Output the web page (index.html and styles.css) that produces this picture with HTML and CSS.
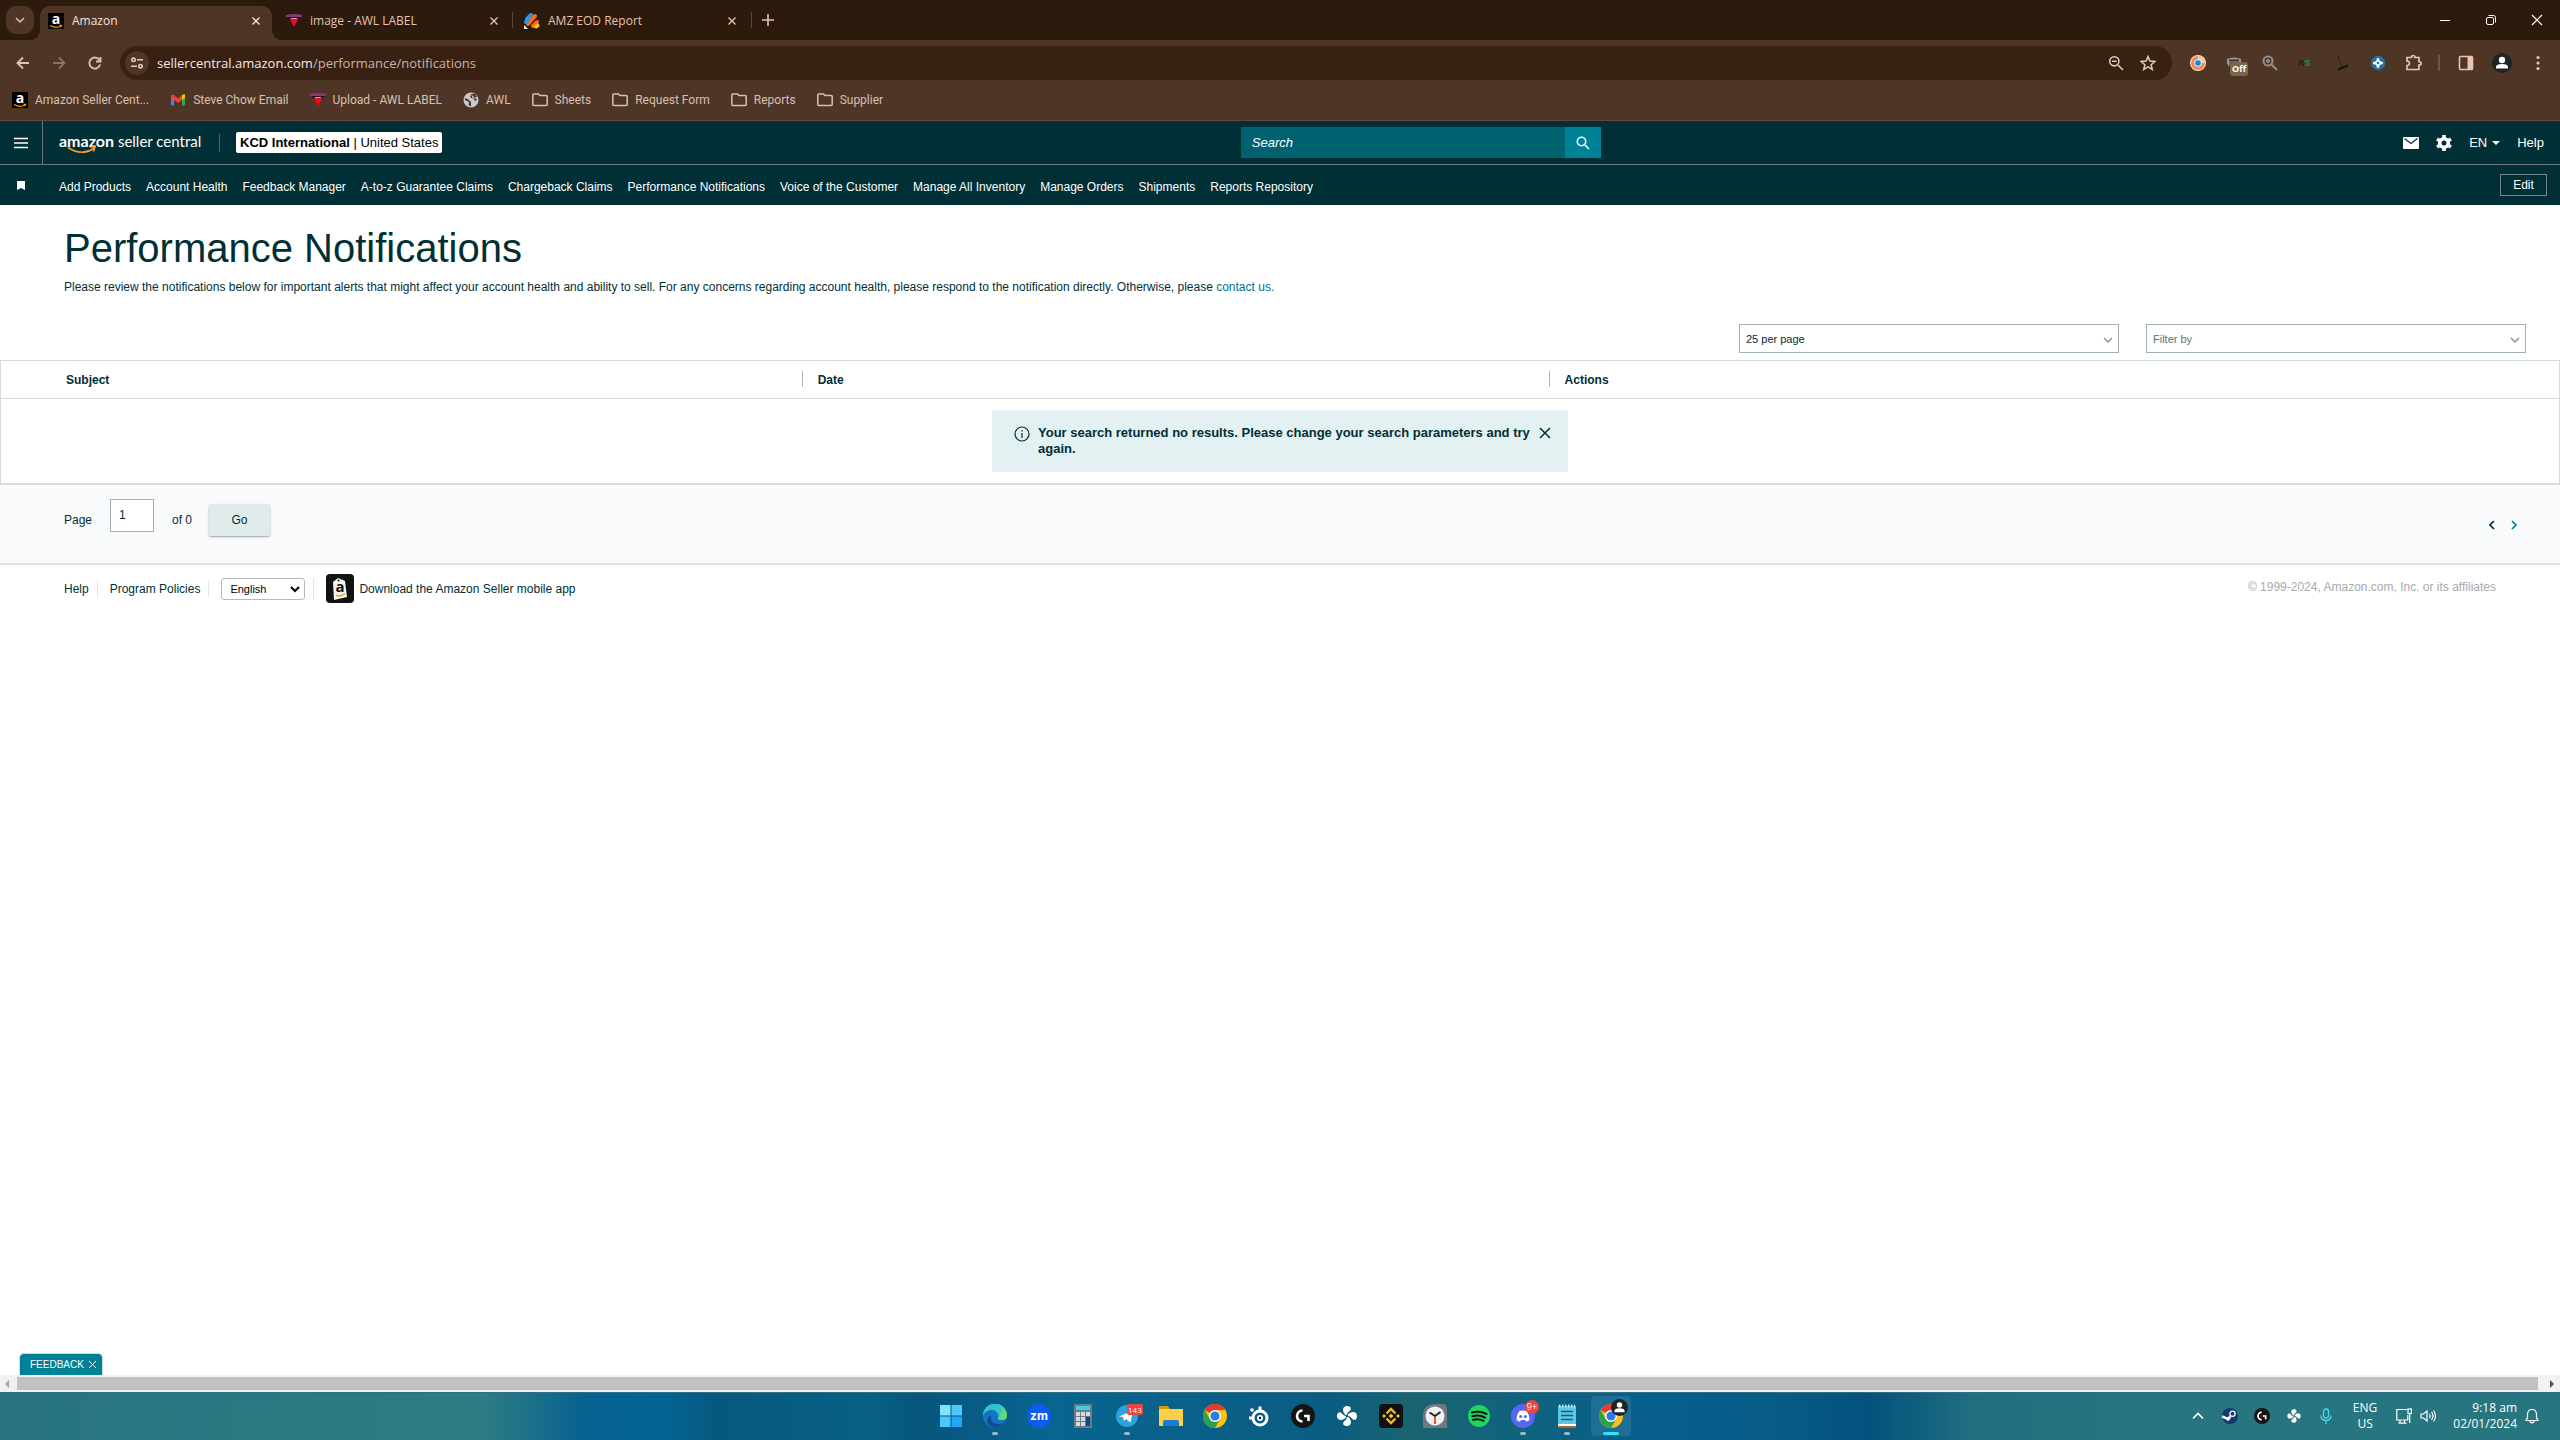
FILE: index.html
```html
<!DOCTYPE html>
<html lang="en">
<head>
    <meta charset="UTF-8">
    <meta name="viewport" content="width=device-width, initial-scale=1.0">
    <title>Amazon</title>
    <link rel="stylesheet" href="styles.css">
</head>
<body>
    <svg class="sprite" aria-hidden="true">
        <symbol id="close" viewBox="0 0 16 16"><path d="M4 4l8 8M12 4l-8 8" fill="none" stroke="currentColor" stroke-width="1.6"/></symbol>
        <symbol id="amazon" viewBox="0 0 16 16"><rect width="16" height="16" fill="#000"/><text x="8" y="11" text-anchor="middle" font-family="Open Sans, sans-serif" font-size="14" font-weight="700" fill="#fff">a</text><path d="M2 12.500q6 3.500 11.500.5M11.500 12.300h2l-.6 1.700" fill="none" stroke="#f90" stroke-width="1.200"/></symbol>
        <symbol id="awl" viewBox="0 0 16 16"><path d="M0 2q8-2 16 0v2H0z" fill="#8a3a70"/><path d="M1 4h14l-3 3H4z" fill="#1d1038"/><path d="M3.500 6h9L8 14z" fill="#f00a14"/><path d="M5 5.500h6" stroke="#d8a0c8"/></symbol>
        <symbol id="folder" viewBox="0 0 16 16"><path d="M.8 3.500v9q0 1 1 1h12.400q1 0 1-1v-8q0-1-1-1H8L6.500 2H1.800q-1 0-1 1z" fill="none" stroke="currentColor" stroke-width="1.500"/></symbol>
        <symbol id="chrome" viewBox="0 0 24 24"><circle cx="12" cy="12" r="12" fill="#fbc116"/><path d="M12 12L1.600 6A12 12 0 0 1 22.400 6H12z" fill="#e33b2e"/><path d="M1.600 6A12 12 0 0 0 12 24l5.200-9L12 12 6.800 15z" fill="#2ba24c"/><circle cx="12" cy="12" r="6" fill="#fff"/><circle cx="12" cy="12" r="4.600" fill="#2a7de9"/></symbol>
        <symbol id="fan" viewBox="0 0 24 24"><g fill="#fff"><path d="M12 12C7 9 6.500 2 12 2c5 0 4.500 4 2 5.500-1.500 1-2 2.500-2 4.500z"/><path d="M12 12c3-5 10-5.500 10 0 0 5-4 4.500-5.500 2-1-1.500-2.500-2-4.500-2z"/><path d="M12 12c5 3 5.500 10 0 10-5 0-4.500-4-2-5.500 1.500-1 2-2.500 2-4.500z"/><path d="M12 12c-3 5-10 5.500-10 0 0-5 4-4.500 5.500-2 1 1.500 2.500 2 4.500 2z"/></g><circle cx="12" cy="12" r="1.300" fill="#0b5c88"/></symbol>
        <symbol id="ghub" viewBox="0 0 24 24"><circle cx="12" cy="12" r="12" fill="#151515"/><path d="M11.500 6.500a5.500 5.500 0 0 0 0 11M13 12h4.500v5" fill="none" stroke="#fff" stroke-width="2.600"/></symbol>
        <symbol id="chev" viewBox="0 0 10 10"><path d="M1 3l4 4 4-4" fill="none" stroke="currentColor" stroke-width="1.500"/></symbol>
        <symbol id="user" viewBox="0 0 20 20"><circle cx="10" cy="10" r="10" fill="#202326"/><circle cx="10" cy="7" r="3.200" fill="#fff"/><path d="M4 15.500v-1.500q0-3 6-3t6 3v1.500z" fill="#fff"/></symbol>
    </svg>

    <!-- Browser tabs -->
    <div class="tab-strip">
        <button class="tab-search" aria-label="Search tabs"><svg width="10" height="10"><use href="#chev"/></svg></button>
        <div class="tab active">
            <svg width="16" height="16"><use href="#amazon"/></svg>
            <span>Amazon</span>
            <button aria-label="Close tab"><svg width="14" height="14"><use href="#close"/></svg></button>
        </div>
        <div class="tab">
            <svg width="16" height="16"><use href="#awl"/></svg>
            <span>image - AWL LABEL</span>
            <button aria-label="Close tab"><svg width="14" height="14"><use href="#close"/></svg></button>
        </div>
        <div class="tab divided">
            <svg width="16" height="16" viewBox="0 0 16 16"><g stroke-width="4" stroke-linecap="round"><path d="M3 6l4-4" stroke="#1c9bf7"/><path d="M4 11l7-8" stroke="#ff6a13"/><path d="M3 8l-1 1" stroke="#1c9bf7"/><path d="M9 13l4-4" stroke="#ff6a13"/><path d="M12 13.500l1.500-1" stroke="#fdbb2c"/></g><path d="M0 12l4 4H0z" fill="#fff"/></svg>
            <span>AMZ EOD Report</span>
            <button aria-label="Close tab"><svg width="14" height="14"><use href="#close"/></svg></button>
        </div>
        <button class="new-tab" aria-label="New tab"><svg width="12" height="12" viewBox="0 0 12 12"><path d="M6 0v12M0 6h12" stroke="currentColor" stroke-width="1.600"/></svg></button>
        <div class="window-buttons">
            <button aria-label="Minimize"><svg width="12" height="12" viewBox="0 0 12 12"><path d="M1 6.500h10" stroke="#fff"/></svg></button>
            <button aria-label="Restore"><svg width="12" height="12" viewBox="0 0 12 12" fill="none" stroke="#fff"><rect x="1.500" y="3.500" width="7" height="7" rx="1.500"/><path d="M3.500 1.500h5q2 0 2 2v5"/></svg></button>
            <button aria-label="Close"><svg width="12" height="12" viewBox="0 0 12 12"><path d="M1 1l10 10M11 1L1 11" stroke="#fff" stroke-width="1.200"/></svg></button>
        </div>
    </div>

    <!-- Toolbar -->
    <div class="toolbar">
        <button class="nav-button" aria-label="Back"><svg width="14" height="14" viewBox="0 0 14 14"><path d="M13 7H2M7 1.500L1.500 7 7 12.500"/></svg></button>
        <button class="nav-button dim" aria-label="Forward"><svg width="14" height="14" viewBox="0 0 14 14"><path d="M1 7h11M7 1.500L12.500 7 7 12.500"/></svg></button>
        <button class="nav-button" aria-label="Reload"><svg width="14" height="14" viewBox="0 0 14 14"><path d="M12.200 8.500A5.500 5.500 0 1 1 11.500 4M12.500 1v4.500H8"/></svg></button>
        <div class="omnibox">
            <button class="site-info" aria-label="Site information"><svg width="12" height="12" viewBox="0 0 12 12" fill="none" stroke="currentColor" stroke-width="1.600"><circle cx="2.500" cy="2.800" r="1.700"/><path d="M6 2.800h6M0 9.200h6"/><circle cx="9.500" cy="9.200" r="1.700"/></svg></button>
            <div class="url">sellercentral.amazon.com<span>/performance/notifications</span></div>
            <button aria-label="Zoom"><svg width="16" height="16" viewBox="0 0 16 16" fill="none" stroke="currentColor" stroke-width="1.600"><circle cx="6.300" cy="6.300" r="4.600"/><path d="M10 10l5 5M4 6.300h4.600"/></svg></button>
            <button aria-label="Bookmark"><svg width="16" height="16" viewBox="0 0 16 16"><path d="M8 1.500l1.900 4.600 5 .4-3.800 3.200 1.200 4.800L8 11.900l-4.300 2.600 1.200-4.800L1.100 6.500l5-.4z" fill="none" stroke="currentColor" stroke-width="1.500"/></svg></button>
        </div>
        <div class="extensions">
            <svg width="16" height="16" viewBox="0 0 16 16"><circle cx="8" cy="8" r="8" fill="#ffe1cb"/><circle cx="8" cy="8" r="7" fill="#f3894a"/><path d="M8 1a7 7 0 0 1 7 7H8z" fill="#fbc79d"/><circle cx="8" cy="8" r="3.800" fill="#d9ecff"/><circle cx="8" cy="8" r="2.800" fill="#1587e6"/></svg>
            <span class="ext-off"><svg width="16" height="16" viewBox="0 0 16 16"><path d="M1 4q7-3 14 0v3H4L3 12 1 8z" fill="#9b9b9b"/><path d="M3 5.500h10" stroke="#333" stroke-width="2"/></svg><b>Off</b></span>
            <svg width="16" height="16" viewBox="0 0 16 16" fill="none" stroke="#8c8c8c" stroke-width="2.200"><circle cx="6" cy="6" r="4.500"/><path d="M9.500 9.500L15 15M4 6h4M6 4v4"/></svg>
            <span class="ext-rs">R<i>S</i></span>
            <svg width="16" height="16" viewBox="0 0 16 16"><path d="M4 1l4 11" stroke="#2b2119"/><path d="M4 14.500l10-4" stroke="#111" stroke-width="2"/></svg>
            <svg width="16" height="16" viewBox="0 0 16 16"><circle cx="8" cy="8" r="7.200" fill="#246ea3"/><path d="M8 3.200L9.900 6.100 12.800 8 9.900 9.900 8 12.800 6.100 9.900 3.200 8l2.900-1.900z" fill="#fff"/><path d="M8 3.200v9.600M3.200 8h9.600" stroke="#fff" stroke-width="2.500"/><circle cx="8" cy="8" r="1.300" fill="#246ea3"/></svg>
            <svg class="puzzle" width="18" height="18" viewBox="0 0 18 18"><path d="M2 3.500h4.500q0-2 1.700-2t1.700 2h4v4q2.200 0 2.200 1.800t-2.200 1.800v4.400H2v-4q2.500 0 2.500-2.200T2 7.200z" fill="none" stroke="currentColor" stroke-width="1.700"/></svg>
            <span class="divider"></span>
            <svg width="16" height="16" viewBox="0 0 16 16"><rect x="1.500" y="1.500" width="13" height="13" rx="1" fill="none" stroke="currentColor" stroke-width="1.600"/><path d="M9.500 1.500H14.500v13H9.500z" fill="currentColor"/></svg>
            <svg class="avatar" width="20" height="20"><use href="#user"/></svg>
            <svg width="16" height="16" viewBox="0 0 16 16" fill="currentColor"><circle cx="8" cy="2.500" r="1.600"/><circle cx="8" cy="8" r="1.600"/><circle cx="8" cy="13.500" r="1.600"/></svg>
        </div>
    </div>

    <!-- Bookmarks bar -->
    <nav class="bookmarks">
        <a href="#"><svg width="16" height="16"><use href="#amazon"/></svg>Amazon Seller Cent...</a>
        <a href="#"><svg width="16" height="16" viewBox="0 0 16 16"><path d="M1 3h3v10.500H2q-1 0-1-1z" fill="#4285f4"/><path d="M12 3h3v9.500q0 1-1 1h-2z" fill="#34a853"/><path d="M12 3l3-1v4l-3 2z" fill="#fbbc04"/><path d="M1 3l3 0 4 3.500L12 3v5l-4 3-4-3-3-2z" fill="#ea4335"/></svg>Steve Chow Email</a>
        <a href="#"><svg width="16" height="16"><use href="#awl"/></svg>Upload - AWL LABEL</a>
        <a href="#"><svg width="16" height="16" viewBox="0 0 16 16"><circle cx="8" cy="8" r="7.500" fill="#c9c9cd"/><path d="M2 6q4 1 6 4v4.500L5.500 13 6 10 2 8zM8 2l4-.2 2 3-3.500 1.500L12 9l2-1M8 2L7 5l3 2" fill="#4f3626"/></svg>AWL</a>
        <a href="#"><svg width="16" height="16"><use href="#folder"/></svg>Sheets</a>
        <a href="#"><svg width="16" height="16"><use href="#folder"/></svg>Request Form</a>
        <a href="#"><svg width="16" height="16"><use href="#folder"/></svg>Reports</a>
        <a href="#"><svg width="16" height="16"><use href="#folder"/></svg>Supplier</a>
    </nav>

    <!-- Seller Central header -->
    <header class="header">
        <button class="menu" aria-label="Menu"><svg width="14" height="12" viewBox="0 0 14 12"><path d="M0 1.500h14M0 6h14M0 10.500h14" stroke="#fff" stroke-width="1.600"/></svg></button>
        <a class="logo" href="#"><b>amazon</b> seller central
            <svg class="smile" width="30" height="8" viewBox="0 0 30 8"><path d="M1 1.500q13 9 26 1M23 1l5 0-1.500 4.500" fill="none" stroke="#f79a2b" stroke-width="1.600"/></svg>
        </a>
        <button class="account"><b>KCD International</b> | United States</button>
        <form class="search">
            <input type="text" placeholder="Search" aria-label="Search">
            <button type="button" aria-label="Search"><svg width="14" height="14" viewBox="0 0 14 14" fill="none" stroke="#fff" stroke-width="1.500"><circle cx="5.500" cy="5.500" r="4.200"/><path d="M8.700 8.700L13 13"/></svg></button>
        </form>
        <div class="header-right">
            <a href="#" aria-label="Messages"><svg width="16" height="12" viewBox="0 0 16 12"><rect width="16" height="12" rx="1" fill="#fff"/><path d="M1.500 1.500L8 6.500l6.500-5" fill="none" stroke="#002f36" stroke-width="1.200"/></svg></a>
            <a href="#" aria-label="Settings"><svg width="16" height="16" viewBox="0 0 16 16"><circle cx="8" cy="8" r="4.300" fill="none" stroke="#fff" stroke-width="3.600"/><path d="M8 0v3M8 13v3M1 4l2.600 1.500M12.400 10.500L15 12M1 12l2.600-1.500M12.400 5.500L15 4" stroke="#fff" stroke-width="3.600"/></svg></a>
            <button class="lang">EN <svg width="8" height="4" viewBox="0 0 8 4"><path d="M0 0h8L4 4z" fill="#fff"/></svg></button>
            <a href="#">Help</a>
        </div>
    </header>
    <nav class="subnav">
        <svg width="8" height="9" viewBox="0 0 8 9"><path d="M0 0h8v9L4 7 0 9z" fill="#fff"/></svg>
        <a href="#">Add Products</a>
        <a href="#">Account Health</a>
        <a href="#">Feedback Manager</a>
        <a href="#">A-to-z Guarantee Claims</a>
        <a href="#">Chargeback Claims</a>
        <a href="#">Performance Notifications</a>
        <a href="#">Voice of the Customer</a>
        <a href="#">Manage All Inventory</a>
        <a href="#">Manage Orders</a>
        <a href="#">Shipments</a>
        <a href="#">Reports Repository</a>
        <button>Edit</button>
    </nav>

    <main>
        <h1>Performance Notifications</h1>
        <p class="intro">Please review the notifications below for important alerts that might affect your account health and ability to sell. For any concerns regarding account health, please respond to the notification directly. Otherwise, please <a href="#">contact us.</a></p>
        <div class="filters">
            <div class="dropdown">
                <select aria-label="Results per page"><option>25 per page</option></select>
                <svg width="10" height="10"><use href="#chev"/></svg>
            </div>
            <div class="dropdown">
                <select class="placeholder" aria-label="Filter by"><option>Filter by</option></select>
                <svg width="10" height="10"><use href="#chev"/></svg>
            </div>
        </div>

        <table>
            <thead>
                <tr><th class="subject">Subject</th><th class="date">Date</th><th>Actions</th></tr>
            </thead>
            <tbody>
                <tr>
                    <td colspan="3">
                        <div class="alert">
                            <svg width="16" height="18" viewBox="0 0 16 18" fill="none" stroke="#002f36" stroke-width="1.200"><circle cx="8" cy="9" r="7"/><path d="M8 8v5M8 5v1.500"/></svg>
                            <p>Your search returned no results. Please change your search parameters and try again.</p>
                            <button aria-label="Dismiss"><svg width="16" height="16" viewBox="0 0 16 16"><path d="M3 3l10 10M13 3L3 13" stroke="#002f36" stroke-width="1.500"/></svg></button>
                        </div>
                    </td>
                </tr>
            </tbody>
        </table>

        <div class="pagination">
            <label for="page">Page</label>
            <input type="text" id="page" value="1">
            <span>of 0</span>
            <button class="go">Go</button>
            <div class="arrows">
                <button aria-label="Previous page"><svg width="6" height="10" viewBox="0 0 6 10"><path d="M5 1L1 5l4 4" fill="none" stroke="currentColor" stroke-width="1.700"/></svg></button>
                <button class="next" aria-label="Next page"><svg width="6" height="10" viewBox="0 0 6 10"><path d="M1 1l4 4-4 4" fill="none" stroke="currentColor" stroke-width="1.700"/></svg></button>
            </div>
        </div>

        <footer>
            <a href="#">Help</a>
            <a href="#">Program Policies</a>
            <div class="language">
                <select aria-label="Language"><option>English</option></select>
                <svg width="10" height="10" viewBox="0 0 10 10"><path d="M1 3l4 4 4-4" fill="none" stroke="#000" stroke-width="2"/></svg>
            </div>
            <a class="app" href="#"><svg width="28" height="29" viewBox="0 0 28 29"><rect width="28" height="29" rx="4" fill="#111"/><path d="M7 8l5-4 7 3 2 16-13 3z" fill="#f4f4f0"/><circle cx="12.500" cy="6.500" r="1" fill="#111"/><text x="14" y="18" text-anchor="middle" font-family="Open Sans, sans-serif" font-size="15" font-weight="700" fill="#111">a</text><path d="M10 21.500q5 1.500 9-2" fill="none" stroke="#f90" stroke-width="1.500"/></svg>Download the Amazon Seller mobile app</a>
            <span class="copyright">© 1999-2024, Amazon.com, Inc. or its affiliates</span>
        </footer>
        <button class="feedback">FEEDBACK <svg width="9" height="9" viewBox="0 0 9 9"><path d="M1 1l7 7M8 1L1 8" stroke="#fff"/></svg></button>
    </main>

    <div class="scrollbar">
        <svg width="4" height="8" viewBox="0 0 4 8"><path d="M4 0v8L0 4z" fill="#a3a3a3"/></svg>
        <div class="thumb"></div>
        <svg width="4" height="8" viewBox="0 0 4 8"><path d="M0 0v8l4-4z" fill="#505050"/></svg>
    </div>

    <!-- Windows taskbar -->
    <div class="taskbar">
        <div class="apps">
            <button aria-label="Start"><svg width="24" height="24" viewBox="0 0 24 24"><g fill="#4cc8ff"><path fill="#7fe3ff" d="M1 1h10.500v10.500H1z"/><path d="M12.500 1H23v10.500H12.500zM1 12.500h10.500V23H1z"/><path fill="#1fa8f8" d="M12.500 12.500H23V23H12.500z"/></g></svg></button>
            <button class="open" aria-label="Edge"><svg width="24" height="24" viewBox="0 0 24 24"><circle cx="12" cy="12" r="12" fill="#1673c4"/><path d="M0 12A12 12 0 0 1 24 11q0 5-5 5-4 0-4-2 1-1 0-4-3-5-8-4-5 1-7 6z" fill="#35c3d0"/><path d="M19 3q5 4 5 8 0 5-5 5-4 0-4-2 5-5 4-11z" fill="#62dc6a"/><path d="M8 12q-1 8 8 8 4 0 6-2-4 6-10 6-8-2-8-8 1-4 4-4z" fill="#0d4f94"/></svg></button>
            <button aria-label="Zoom"><svg width="24" height="24" viewBox="0 0 24 24"><circle cx="12" cy="12" r="12" fill="#0b5cf0"/><text x="12" y="16" text-anchor="middle" font-family="Inter, sans-serif" font-size="12" font-weight="700" fill="#fff">zm</text></svg></button>
            <button aria-label="Calculator"><svg width="24" height="24" viewBox="0 0 24 24"><path d="M3 0h18v24H3z" fill="#6f7a84"/><path d="M5 2h14v4H5z" fill="#3cd0ef"/><path d="M5 8h4v4H5zM10 8h4v4h-4zM15 8h4v4h-4zM5 13h4v4H5zM10 13h4v4h-4zM5 18h4v4H5zM10 18h4v4h-4z" fill="#d5dbe0"/><path d="M15 13h4v9h-4z" fill="#0d4a8a"/></svg></button>
            <button class="open" aria-label="Telegram"><svg width="24" height="24" viewBox="0 0 24 24"><circle cx="12" cy="12" r="11" fill="#2ea2dc"/><path d="M4 12.500l14-6-2.500 12L11 15l-2 2-1-4z" fill="#fff"/></svg><span class="badge square">143</span></button>
            <button aria-label="File Explorer"><svg width="24" height="24" viewBox="0 0 24 24"><path d="M0 2h9l2 3v4H0z" fill="#d99a00"/><path d="M0 5h24v17H0z" fill="#ffcf48"/><path d="M4 22v-4q0-2 2-2h12q2 0 2 2v4z" fill="#1b7dd0"/></svg></button>
            <button aria-label="Chrome"><svg width="24" height="24"><use href="#chrome"/></svg></button>
            <button aria-label="SteelSeries"><svg width="24" height="24" viewBox="0 0 24 24"><circle cx="13" cy="14" r="7" fill="none" stroke="#fff" stroke-width="3"/><circle cx="13" cy="14" r="3" fill="#fff"/><circle cx="13" cy="14" r="1.200" fill="#111"/><path d="M13 7V2.500M6 14H2" stroke="#fff" stroke-width="3"/><circle cx="5" cy="6" r="1.800" fill="#fff"/></svg></button>
            <button aria-label="G Hub"><svg width="24" height="24"><use href="#ghub"/></svg></button>
            <button aria-label="Fan Control"><svg width="24" height="24"><use href="#fan"/></svg></button>
            <button aria-label="Binance"><svg width="24" height="24" viewBox="0 0 24 24"><rect width="24" height="24" rx="4" fill="#111"/><path d="M7.500 9.500L12 5l4.500 4.500M7.500 14.500L12 19l4.500-4.500" fill="none" stroke="#f3ba2f" stroke-width="2.400"/><path d="M12 9.500l2.500 2.500-2.500 2.500L9.500 12zM5 10l2 2-2 2-2-2zM19 10l2 2-2 2-2-2z" fill="#f3ba2f"/></svg></button>
            <button aria-label="Clock"><svg width="24" height="24" viewBox="0 0 24 24"><path d="M0 12Q0 0 12 0h10l2 4v20H0z" fill="#6d7882"/><circle cx="12" cy="12" r="9.500" fill="#f0f0f2"/><path d="M12 12v8" stroke="#e8591c" stroke-width="2"/><path d="M12 12L6.500 8.500M12 12l5.500-4" stroke="#222" stroke-width="2"/></svg></button>
            <button aria-label="Spotify"><svg width="24" height="24" viewBox="0 0 24 24"><circle cx="12" cy="12" r="11" fill="#1ed760"/><path d="M5 8.500q8-2 14.500 1.500M5.500 12.300q7-2 12.500 1.300M6 15.800q6-1.500 10.500 1" fill="none" stroke="#111" stroke-width="2" stroke-linecap="round"/></svg></button>
            <button class="open" aria-label="Discord"><svg width="24" height="24" viewBox="0 0 24 24"><circle cx="12" cy="12" r="12" fill="#5865f2"/><path d="M8.500 7q3.500-.8 7 0 3 3.500 3 9-2 1.500-3.500 1.500l-1-1.500h-4l-1 1.500Q7.500 17.500 5.500 16q0-5.500 3-9z" fill="#fff"/><circle cx="9.600" cy="12.500" r="1.500" fill="#5865f2"/><circle cx="14.400" cy="12.500" r="1.500" fill="#5865f2"/></svg><span class="badge round">9+</span></button>
            <button class="open" aria-label="Notepad"><svg width="24" height="24" viewBox="0 0 24 24"><path d="M3 2h18v19H3z" fill="#5ec6e4"/><path d="M3 20h18v2H3z" fill="#fff"/><path d="M3 22h18v2H3z" fill="#b3621b"/><path d="M6 7.500h12M6 11.500h12M6 15.500h12" stroke="#12607f" stroke-width="1.500"/><path d="M4 2h16" stroke="#b8ecf8" stroke-width="3" stroke-dasharray="1.500 1.500"/></svg></button>
            <button class="current" aria-label="Chrome, active window"><svg width="24" height="24"><use href="#chrome"/></svg><svg class="profile" width="17" height="17"><use href="#user"/></svg></button>
        </div>
        <div class="tray">
            <svg class="more" width="12" height="8" viewBox="0 0 12 8"><path d="M1 6.500l5-5 5 5" fill="none" stroke="#fff" stroke-width="1.600"/></svg>
            <svg width="16" height="16" viewBox="0 0 16 16"><circle cx="8" cy="8" r="8" fill="#14396e"/><circle cx="10.500" cy="5.800" r="2.600" fill="none" stroke="#fff" stroke-width="1.300"/><path d="M0 8.500l6 2.500 2.500-2.500" fill="none" stroke="#fff" stroke-width="2.500"/><circle cx="6" cy="11" r="1.800" fill="#fff"/></svg>
            <svg width="16" height="16"><use href="#ghub"/></svg>
            <svg width="16" height="16"><use href="#fan"/></svg>
            <svg width="16" height="16" viewBox="0 0 16 16" fill="none" stroke="#4fd8ea" stroke-width="1.300"><rect x="5.500" y="1" width="5" height="9" rx="2.500"/><path d="M3 7.500q0 5 5 5t5-5M8 12.500V16"/></svg>
            <div class="ime">ENG<br>US</div>
            <svg width="16" height="16" viewBox="0 0 16 16" fill="none" stroke="#fff" stroke-width="1.200"><path d="M11 1.500H.8v10.500h11V7M4 12v3M8.500 12v3M2.500 15.200h8"/><rect x="12" y="1" width="3.400" height="4.500"/><path d="M13.700 5.500V15"/></svg>
            <svg width="17" height="16" viewBox="0 0 17 16" fill="none" stroke="#fff" stroke-width="1.200"><path d="M1 6h2.500L7 3v10l-3.500-3H1zM9.500 6q1.500 2 0 4M11.500 4q3 4 0 8M13.500 2.500q4 5.500 0 11"/></svg>
            <div class="clock">9:18 am<br>02/01/2024</div>
            <svg width="14" height="16" viewBox="0 0 14 16" fill="none" stroke="#fff" stroke-width="1.200"><path d="M1 12.500l1.500-3V6.500Q2.500 1.500 7 1.500t4.500 5v3l1.500 3zM5 12.800q0 2 2 2t2-2"/></svg>
        </div>
    </div>
</body>
</html>
```

FILE: styles.css
```css
* { box-sizing: border-box; }
body {
    margin: 0;
    min-height: 100vh;
    display: flex;
    flex-direction: column;
    font-family: "Liberation Sans", Arial, sans-serif;
    font-size: 12px;
    line-height: 16px;
    color: #002f36;
    background: #fff;
}
a { color: inherit; text-decoration: none; }
button, input, select { font: inherit; color: inherit; }
button { padding: 0; border: none; background: none; cursor: pointer; }
svg { display: block; flex: none; }
.sprite { display: none; }

/* browser */
.tab-strip, .toolbar, .taskbar { font-family: "Open Sans", "Noto Sans", sans-serif; }
.tab-strip {
    display: flex;
    align-items: flex-end;
    height: 40px;
    padding-left: 6px;
    background: #2c1a0d;
    color: #e7c3ae;
}
.tab-search {
    display: flex;
    align-items: center;
    justify-content: center;
    width: 28px;
    height: 28px;
    margin: 0 6px 6px 0;
    border-radius: 10px;
    background: #4f3526;
}
.tab {
    position: relative;
    display: flex;
    align-items: center;
    width: 238px;
    height: 34px;
    padding: 0 9px 4px 14px;
}
.tab span { flex: 1; margin-left: 8px; }
.tab.active {
    width: 232px;
    padding: 0 9px 4px 8px;
    border-radius: 10px 10px 0 0;
    background: #4f3526;
    color: #f3e3da;
}
.tab.active::before, .tab.active::after {
    content: "";
    position: absolute;
    bottom: 0;
    width: 10px;
    height: 10px;
}
.tab.active::before { left: -10px; background: radial-gradient(circle at 0 0, transparent 10px, #4f3526 10px); }
.tab.active::after { right: -10px; background: radial-gradient(circle at 100% 0, transparent 10px, #4f3526 10px); }
.tab.divided::before, .tab.divided::after {
    content: "";
    position: absolute;
    top: 6px;
    left: 2px;
    width: 1px;
    height: 16px;
    background: #5d4535;
}
.tab.divided::after { left: auto; right: -4px; }
.new-tab { margin: 0 0 14px 14px; }
.window-buttons { display: flex; margin-left: auto; }
.window-buttons button { width: 46px; height: 40px; display: flex; align-items: center; justify-content: center; }
.toolbar {
    display: flex;
    align-items: center;
    height: 40px;
    padding: 6px 14px 0 16px;
    background: #4f3526;
    color: #eac3ac;
}
.nav-button { margin-right: 22px; }
.nav-button svg { fill: none; stroke: currentColor; stroke-width: 1.8; }
.nav-button.dim { color: #8f6f5e; }
.omnibox {
    flex: 1;
    display: flex;
    align-items: center;
    gap: 16px;
    height: 34px;
    margin: 0 18px 0 -4px;
    padding: 0 16px 0 5px;
    border-radius: 17px;
    background: #382013;
    color: #dfc9bd;
}
.site-info {
    display: flex;
    align-items: center;
    justify-content: center;
    width: 24px;
    height: 24px;
    margin-right: -8px;
    border-radius: 12px;
    background: #4f3526;
}
.url { flex: 1; font-size: 13px; color: #f6e9e2; }
.url span { color: #cbb3a5; }
.extensions { display: flex; align-items: center; gap: 20px; }
.ext-off { position: relative; }
.ext-off b {
    position: absolute;
    left: 4px;
    top: 7px;
    padding: 0 2px;
    border-radius: 3px;
    background: #7c6647;
    color: #fff;
    font-size: 9px;
    line-height: 14px;
}
.ext-rs { width: 16px; font: bold 9px/14px "Liberation Sans", sans-serif; color: #222; }
.ext-rs i { font-style: normal; color: #1a9a4a; }
.puzzle { margin: 0 -1px; }
.avatar { margin: 0 -2px; }
.divider { width: 2px; height: 16px; margin: 0 -2px 0 -4px; background: #73553f; }
.bookmarks {
    display: flex;
    align-items: center;
    gap: 21px;
    height: 41px;
    padding: 0 12px;
    border-bottom: 1px solid #5d4a3d;
    background: #4f3526;
    color: #d6c0b2;
    font-family: Roboto, sans-serif;
}
.bookmarks a { display: flex; align-items: center; gap: 7px; }

/* site header */
.header {
    display: flex;
    align-items: center;
    height: 44px;
    border-bottom: 1px solid #65787b;
    background: #002f36;
    color: #fff;
    font-size: 13px;
}
.menu {
    display: flex;
    align-items: center;
    width: 43px;
    height: 43px;
    padding-left: 14px;
    border-right: 1px solid #65787b;
}
.logo {
    position: relative;
    width: 177px;
    padding: 0 0 4px 16px;
    border-right: 1px solid #4e686c;
    font: 15px/14px Lato, sans-serif;
}
.logo b { font-size: 16px; }
.smile { position: absolute; left: 24px; top: 12px; }
.account { height: 21px; margin-left: 16px; padding: 0 4px; border-radius: 2px; background: #fff; color: #000; }
.search { display: flex; width: 360px; height: 31px; margin: 0 auto; }
.search input {
    flex: 1;
    min-width: 0;
    padding: 0 11px;
    border: none;
    background: #00626f;
    font-style: italic;
    color: #fff;
}
.search input::placeholder { color: #fff; }
.search button { display: flex; align-items: center; justify-content: center; width: 36px; background: #008296; }
.header-right { display: flex; align-items: center; gap: 17px; padding: 0 16px 0 4px; }
.lang { display: flex; align-items: center; gap: 5px; }
.subnav {
    display: flex;
    align-items: center;
    gap: 15px;
    height: 40px;
    padding: 0 13px 0 17px;
    background: #002f36;
    color: #fff;
}
.subnav svg { margin-right: 19px; }
.subnav a { padding-top: 3px; }
.subnav button { width: 47px; height: 22px; margin-left: auto; border: 1px solid #758789; }

/* page */
main { position: relative; flex: 1; }
h1 { margin: 0; padding: 18px 64px 0; font-size: 40px; line-height: 50px; font-weight: normal; }
.intro { margin: 6px 64px 0; }
.intro a { color: #007185; }
.filters { display: flex; justify-content: flex-end; gap: 27px; margin: 29px 34px 7px; }
.dropdown { position: relative; width: 380px; }
.dropdown select {
    appearance: none;
    display: block;
    width: 100%;
    height: 29px;
    padding: 0 6px;
    border: 1px solid #a2b2b4;
    border-radius: 0;
    background: #fff;
    font-size: 11px;
}
.dropdown .placeholder { color: #5d7073; }
.dropdown svg { position: absolute; right: 6px; top: 11px; color: #829698; }
table {
    width: 100%;
    border: 1px solid #d5dbdb;
    border-bottom: 2px solid #d5dbdf;
    border-spacing: 0;
    table-layout: fixed;
}
th { height: 38px; padding: 0 16px; border-bottom: 1px solid #d5dbdb; text-align: left; }
th + th { background: linear-gradient(#aab7b8, #aab7b8) 0 10px / 1px 16px no-repeat; }
.subject { width: 31.3%; padding-left: 65px; }
.date { width: 29.2%; }
td { padding: 11px; }
.alert {
    display: flex;
    align-items: flex-start;
    width: 576px;
    height: 62px;
    margin: 0 auto;
    padding: 15px 15px 0 22px;
    background: #e3f1f2;
    font-size: 13px;
    font-weight: bold;
}
.alert p { flex: 1; margin: 0 0 0 8px; }
.pagination {
    display: flex;
    align-items: center;
    height: 80px;
    padding: 0 43px 8px 64px;
    border-bottom: 2px solid #dfe3e6;
    background: #f8fafc;
}
.pagination input {
    width: 44px;
    height: 33px;
    margin: 0 18px 10px;
    padding: 0 8px;
    border: 1px solid #a2b2b4;
    background: #fff;
}
.go {
    width: 61px;
    height: 32px;
    margin-left: 17px;
    border-radius: 2px;
    background: #e1ebec;
    box-shadow: 0 1px 2px #9aa5a6;
}
.arrows { display: flex; gap: 16px; margin: 10px 0 0 auto; }
.arrows .next { color: #008296; }
footer { display: flex; align-items: center; padding: 9px 64px; }
footer > a, .language { padding-right: 8px; margin-right: 12px; border-right: 1px solid #e2e6e8; }
.language { position: relative; }
.language select {
    appearance: none;
    display: block;
    width: 84px;
    height: 22px;
    padding: 0 8px;
    border: 1px solid #b5babd;
    border-radius: 3px;
    background: #fff;
    color: #000;
    font-size: 11px;
}
.language svg { position: absolute; right: 13px; top: 6px; }
footer .app { display: flex; align-items: center; gap: 5px; border: none; }
.copyright { margin: 0 0 4px auto; color: #a6abad; }
.feedback {
    position: absolute;
    left: 19px;
    bottom: 0;
    display: flex;
    align-items: center;
    gap: 4px;
    height: 22px;
    padding: 0 5px 0 10px;
    border: 1px solid #c5dfe3;
    border-bottom: none;
    border-radius: 5px 5px 0 0;
    background: #008296;
    color: #fff;
    font-size: 10px;
}

/* scrollbar and taskbar */
.scrollbar {
    display: flex;
    align-items: center;
    gap: 8px;
    height: 17px;
    padding: 0 6px 0 5px;
    background: #f1f1f1;
}
.thumb { flex: 1; height: 13px; margin-right: 4px; background: #c1c1c1; }
.taskbar {
    position: relative;
    display: flex;
    align-items: center;
    justify-content: center;
    height: 48px;
    padding: 0 0 1px 2px;
    border-top: 1px solid #2f6f85;
    background: linear-gradient(90deg, #27747e 0, #2c7c83 17%, #2c7c83 19%, #066191 23%, #026494 26%, #07587f 28%, #086085 34%, #07557d 36%, #086590 41%, #0b5c82 52%, #1a646f 55%, #06608c 64%, #075a86 70%, #04517c 73%, #1f6f80 77%, #27757f 84%, #27757f 100%);
    color: #fff;
}
.apps { display: flex; gap: 4px; }
.apps button {
    position: relative;
    display: flex;
    align-items: center;
    justify-content: center;
    width: 40px;
    height: 40px;
}
.apps .open::after, .apps .current::after {
    content: "";
    position: absolute;
    left: 17px;
    bottom: 1px;
    width: 6px;
    height: 3px;
    border-radius: 2px;
    background: #9db9c8;
}
.apps .current { border-radius: 4px; background: #1e6e95; }
.apps .current::after { left: 12px; width: 16px; background: #2fe2ff; }
.badge { position: absolute; color: #fff; background: #f0453f; }
.badge.square { left: 20px; top: 8px; padding: 0 1px; border-radius: 2px; font-size: 8px; line-height: 11px; }
.badge.round { left: 22px; top: 4px; width: 14px; height: 14px; border-radius: 7px; font-size: 9px; line-height: 14px; }
.profile { position: absolute; right: 3px; top: 3px; }
.tray { position: absolute; right: 21px; display: flex; align-items: center; gap: 16px; }
.tray .more { margin-right: 2px; }
.ime { margin: 0 3px; text-align: center; }
.tray .clock { text-align: right; }
.tray .ime + svg { margin-right: -8px; }
.tray .clock + svg { margin-left: -8px; }
```
